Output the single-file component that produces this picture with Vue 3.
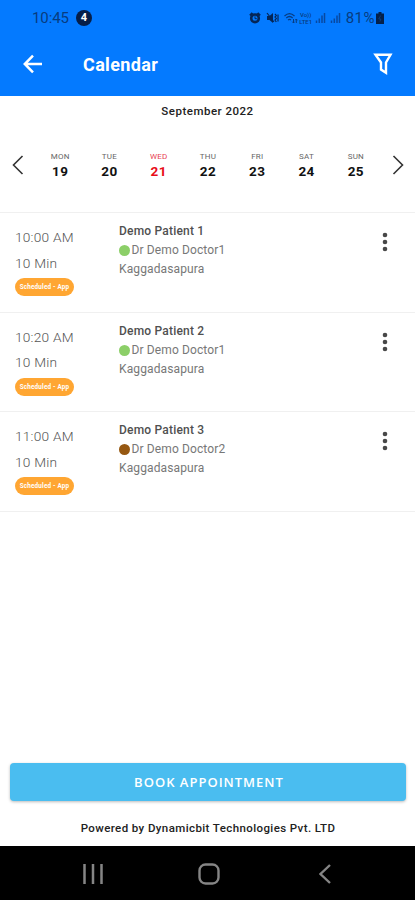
<script setup>
import { ref } from 'vue'

const selected = ref(21)

const days = [
  { name: 'MON', date: 19 },
  { name: 'TUE', date: 20 },
  { name: 'WED', date: 21 },
  { name: 'THU', date: 22 },
  { name: 'FRI', date: 23 },
  { name: 'SAT', date: 24 },
  { name: 'SUN', date: 25 }
]

const appointments = [
  { time: '10:00 AM', patient: 'Demo Patient 1', doctor: 'Dr Demo Doctor1', color: '#8ccf68' },
  { time: '10:20 AM', patient: 'Demo Patient 2', doctor: 'Dr Demo Doctor1', color: '#8ccf68' },
  { time: '11:00 AM', patient: 'Demo Patient 3', doctor: 'Dr Demo Doctor2', color: '#965811' }
]
</script>

<template>
  <div class="screen">
    <header>
      <div class="statusbar">
        <span class="clock">10:45</span>
        <span class="count">4</span>
        <div class="system">
          <!-- alarm -->
          <svg class="alarm" width="12" height="12" viewBox="0 0 12 12">
            <path d="M1 3.500 3.500 1M11 3.500 8.500 1" stroke="#052657" stroke-width="2.200" />
            <circle cx="6" cy="6.300" r="3.800" fill="none" stroke="#052657" stroke-width="2.600" />
            <path d="M6 4.300v2.400h1.800" fill="none" stroke="#052657" stroke-width="1" />
          </svg>
          <!-- vibrate / mute -->
          <svg class="mute" width="13" height="12" viewBox="0 0 13 12">
            <path d="M1 4h2.500L7 1v10L3.500 8H1z" fill="#052657" />
            <path d="M1 1l7 9M9 2l1.300 1.500L9 5l1.300 1.500L9 8l1.300 2M12 2.500v7" fill="none" stroke="#052657" stroke-width="1.200" />
          </svg>
          <!-- wifi -->
          <svg class="wifi" width="14" height="12" viewBox="0 0 14 12">
            <path d="M.5 4Q5.500-.8 10.500 4M2.300 6Q5.500 3 8.700 6M4 8q1.500-1.200 3 0" fill="none" stroke="#083c80" stroke-width="1.200" />
            <path d="M9.500 7v4M8.300 9.700l1.200 1.300 1.200-1.300M12.300 11V7M11.200 8.300 12.300 7l1.100 1.300" fill="none" stroke="#083c80" stroke-width="1" />
          </svg>
          <span class="volte"><span>Vo))</span><span>LTE1</span></span>
          <svg class="signal" width="11" height="11" viewBox="0 0 11 11">
            <path d="M1.500 11V8.500M4.300 11V6.500M7 11V3.500M9.500 11V1" stroke="#0849a0" stroke-width="1.500" />
          </svg>
          <svg class="signal second" width="11" height="11" viewBox="0 0 11 11">
            <path d="M1.500 11V8.500M4.300 11V6.500M7 11V3.500M9.500 11V1" stroke="#0849a0" stroke-width="1.500" />
          </svg>
          <span class="percent">81%</span>
          <svg class="battery" width="8" height="12" viewBox="0 0 8 12">
            <path d="M2.500 0h3v1.500H8V12H0V1.500h2.500z" fill="#04204a" />
            <path d="M4.700 3.500 2.700 7h2.200l-1 2.500" fill="none" stroke="#0d468c" stroke-width=".7" />
          </svg>
        </div>
      </div>
      <div class="titlebar">
        <svg width="20" height="20" viewBox="0 0 20 20">
          <path d="M19 10H2.200M10 1.700 1.800 10l8.200 8.300" fill="none" stroke="#fff" stroke-width="2.500" />
        </svg>
        <h1>Calendar</h1>
        <svg class="filter" width="20" height="22" viewBox="0 0 20 22">
          <path d="M2.500 1.800h15L13 9.500v10.200L8 16.500v-7z" fill="none" stroke="#fff" stroke-width="2.400" />
        </svg>
      </div>
    </header>

    <section class="calendar">
      <div class="month">September 2022</div>
      <div class="week">
        <svg width="12" height="20" viewBox="0 0 12 20">
          <path d="M10.500 1 1.500 10l9 9" fill="none" stroke="#333" stroke-width="1.600" />
        </svg>
        <div class="days">
          <div v-for="day in days" :key="day.date" class="day" :class="{ active: day.date === selected }" @click="selected = day.date">
            <span class="name">{{ day.name }}</span>
            <span class="date">{{ day.date }}</span>
          </div>
        </div>
        <svg width="12" height="20" viewBox="0 0 12 20">
          <path d="M1.500 1l9 9-9 9" fill="none" stroke="#333" stroke-width="1.600" />
        </svg>
      </div>
    </section>

    <main>
      <article v-for="item in appointments" :key="item.time" class="appointment">
        <div class="when">
          <span>{{ item.time }}</span>
          <span>10 Min</span>
          <span class="tag">Scheduled - App</span>
        </div>
        <div class="who">
          <span class="patient">{{ item.patient }}</span>
          <span class="doctor"><i :style="{ background: item.color }"></i>{{ item.doctor }}</span>
          <span class="place">Kaggadasapura</span>
        </div>
        <svg class="more" width="6" height="20" viewBox="0 0 6 20">
          <g fill="#484848">
            <circle cx="3" cy="3" r="2.300" />
            <circle cx="3" cy="10" r="2.300" />
            <circle cx="3" cy="17" r="2.300" />
          </g>
        </svg>
      </article>
    </main>

    <footer>
      <button>BOOK APPOINTMENT</button>
      <p>Powered by Dynamicbit Technologies Pvt. LTD</p>
    </footer>

    <nav>
      <svg width="20" height="20" viewBox="0 0 20 20">
        <path d="M1.500 0v20M10 0v20M18.500 0v20" stroke="#858585" stroke-width="2.500" />
      </svg>
      <svg class="home" width="22" height="22" viewBox="0 0 22 22">
        <rect x="1.500" y="1.500" width="19" height="19" rx="6" fill="none" stroke="#858585" stroke-width="2.400" />
      </svg>
      <svg width="12" height="20" viewBox="0 0 12 20">
        <path d="M11 1 1.500 10l9.500 9" fill="none" stroke="#858585" stroke-width="2.400" />
      </svg>
    </nav>
  </div>
</template>

<style>
body {
  margin: 0;
}
</style>

<style scoped>
* {
  box-sizing: border-box;
}

.screen {
  display: flex;
  flex-direction: column;
  width: 415px;
  height: 900px;
  overflow: hidden;
  background: #fff;
  font-family: Roboto, "Liberation Sans", sans-serif;
}

svg {
  display: block;
  flex: none;
}

/* Header */
header {
  height: 96px;
  flex: none;
  background: #047aff;
}

.statusbar {
  display: flex;
  align-items: center;
  height: 35px;
  padding: 0 31px 0 32px;
  color: #083c80;
}

.clock {
  width: 44px;
  font-size: 15px;
  letter-spacing: -.1px;
}

.count {
  width: 16px;
  height: 16px;
  border-radius: 50%;
  background: #061e48;
  color: #fff;
  font-size: 11px;
  font-weight: 700;
  line-height: 16px;
  text-align: center;
}

.system {
  display: flex;
  align-items: center;
  margin-left: auto;
}

.mute {
  margin-left: 5px;
}

.wifi {
  margin-left: 5px;
}

.volte {
  display: flex;
  flex-direction: column;
  width: 16px;
  font-size: 6px;
  font-weight: 500;
  line-height: 7px;
  text-align: center;
}

.signal {
  margin-left: 1px;
}

.signal.second {
  margin-left: 4px;
}

.percent {
  margin: 0 1px 0 5px;
  font-size: 15px;
  letter-spacing: .5px;
}

.titlebar {
  display: flex;
  align-items: center;
  height: 58px;
  padding: 0 22px 0 23px;
}

h1 {
  margin: 1px 0 0 40px;
  color: #fff;
  font-size: 18px;
  font-weight: 700;
  letter-spacing: .35px;
}

.filter {
  margin-left: auto;
}

/* Week strip */
.calendar {
  height: 117px;
  flex: none;
  border-bottom: 1px solid #f0f0f0;
}

.month {
  padding-top: 8px;
  color: #222;
  font-size: 11.5px;
  font-weight: 500;
  letter-spacing: .5px;
  line-height: 14px;
  text-align: center;
}

.week {
  display: flex;
  align-items: center;
  justify-content: space-between;
  height: 40px;
  margin-top: 27px;
  padding: 0 11px 0 12px;
}

.days {
  display: flex;
  width: 345px;
  padding-top: 2px;
}

.day {
  display: flex;
  flex: 1;
  flex-direction: column;
  align-items: center;
  color: #111;
}

.name {
  color: #666;
  font-size: 8px;
  letter-spacing: .25px;
  line-height: 11px;
}

.date {
  font-size: 13.5px;
  font-weight: 700;
  letter-spacing: .4px;
  line-height: 19px;
}

.active .name {
  color: #e8404f;
}

.active .date {
  color: #e80d18;
}

/* Appointments */
main {
  flex: 1;
}

.appointment {
  display: flex;
  height: 99.5px;
  padding-left: 15px;
  border-bottom: 1px solid #f0f0f0;
}

.when {
  display: flex;
  flex-direction: column;
  align-items: flex-start;
  width: 104px;
  padding-top: 12px;
  color: #555;
  font-size: 13.7px;
  font-weight: 300;
  letter-spacing: .22px;
  line-height: 25.5px;
}

.tag {
  width: 59px;
  height: 18px;
  margin-top: 2px;
  border-radius: 9px;
  background: #ffa632;
  color: #fff;
  font-size: 6.3px;
  font-weight: 700;
  letter-spacing: .2px;
  line-height: 18px;
  text-align: center;
  white-space: nowrap;
}

.who {
  display: flex;
  flex-direction: column;
  padding-top: 9px;
  color: #777;
  font-size: 12px;
  letter-spacing: .12px;
  line-height: 19px;
}

.patient {
  color: #505050;
  font-weight: 500;
  letter-spacing: .2px;
}

.doctor {
  display: flex;
  align-items: center;
}

.doctor i {
  width: 11px;
  height: 11px;
  margin-right: 1.5px;
  border-radius: 50%;
}

.more {
  margin: 19px 27px 0 auto;
}

/* Footer */
footer {
  height: 84px;
  flex: none;
  padding: 1px 9px 0 10px;
}

button {
  display: block;
  width: 100%;
  height: 38px;
  padding: 0 0 1px 2px;
  border: 0;
  border-radius: 4px;
  background: #4abdf0;
  box-shadow: 0 1px 3px #0004;
  color: #fff;
  font-family: "Open Sans", sans-serif;
  font-size: 13px;
  font-weight: 600;
  letter-spacing: 1px;
}

p {
  margin: 20px 0 0;
  color: #222;
  font-size: 11.5px;
  font-weight: 500;
  letter-spacing: .4px;
  line-height: 15px;
  text-align: center;
  white-space: nowrap;
}

nav {
  display: flex;
  align-items: center;
  justify-content: space-between;
  height: 54px;
  flex: none;
  padding: 2px 84px 0 83px;
  background: #000;
}

.home {
  margin-right: 4px;
}
</style>
